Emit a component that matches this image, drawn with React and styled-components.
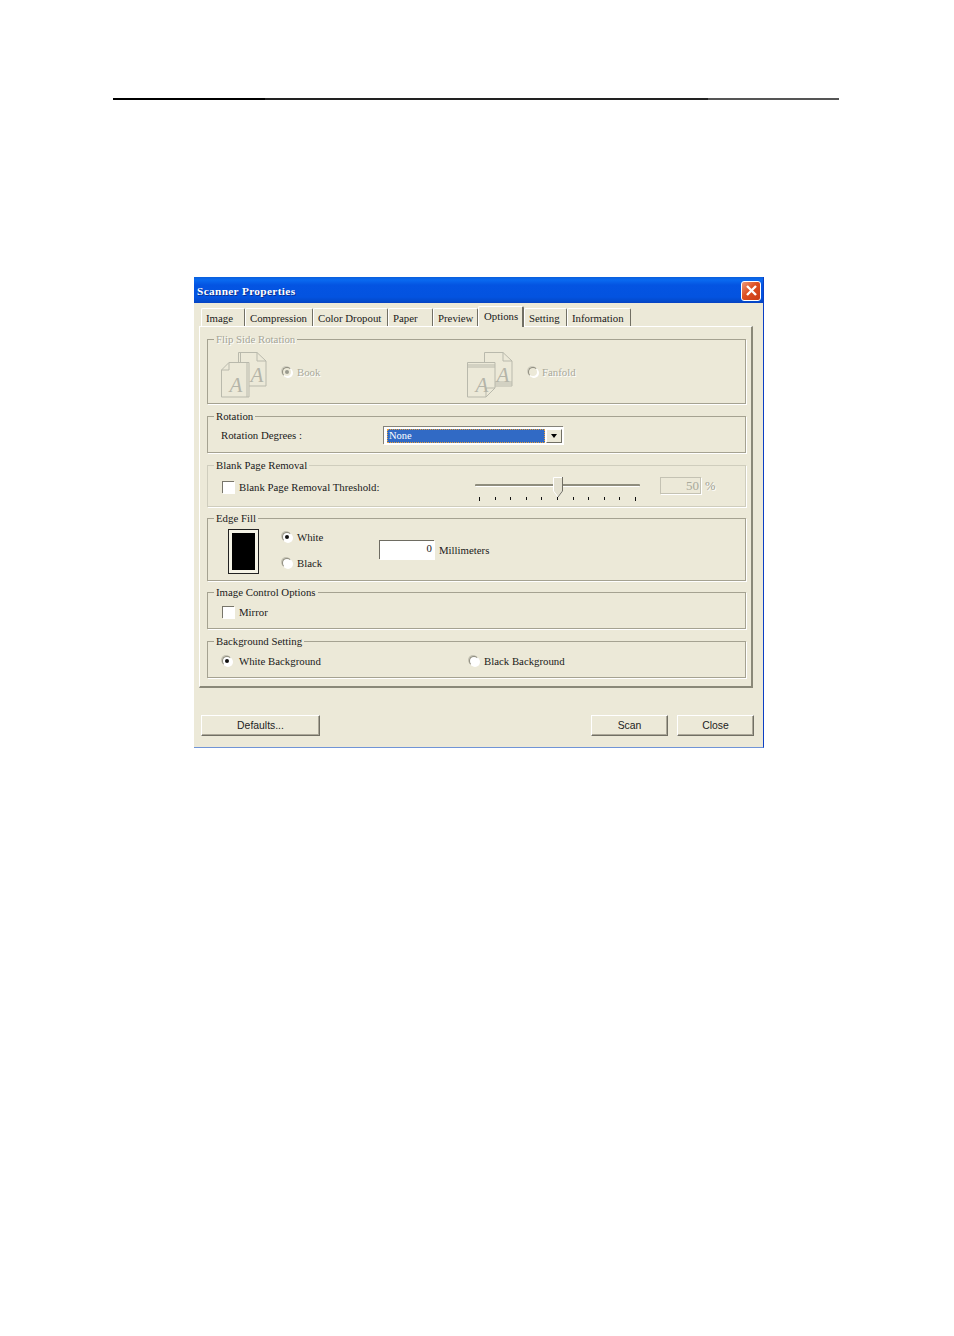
import React from "react";
import styled, { createGlobalStyle } from "styled-components";

const Global = createGlobalStyle`
  html, body { margin: 0; padding: 0; background: #fff; }
  * { box-sizing: border-box; }
`;
const Page = styled.div`
  width: 954px; height: 1336px; padding-top: 98px; background: #fff; overflow: hidden;
  font-family: "Liberation Serif", serif; font-size: 10.8px; color: #1a1a1a;
`;
const Rule = styled.div`
  width: 726px; height: 2px; margin-left: 113px; background: linear-gradient(90deg, #000 0 21%, #222 21% 82%, #555 82%);
`;
const Dialog = styled.div`
  width: 570px; height: 471px; margin: 177px 0 0 194px; background: #ece9d8;
  border-right: 1px solid #0b3fc4; border-bottom: 1px solid #7094d6;
  display: flex; flex-direction: column;
`;
const TitleBar = styled.div`
  height: 26px; flex: none; display: flex; align-items: center; justify-content: space-between;
  padding: 1px 2px 0 3px;
  background: linear-gradient(180deg, #0a5fdc 0, #0a6af0 3px, #0454e2 8px, #0353e0 20px, #0348c8 25px, #0a3fc0 100%);
`;
const Title = styled.span`
  color: #fff; font-weight: 700; font-size: 11.3px; letter-spacing: 0.35px; text-shadow: 1px 1px 0 #0a2f90;
`;
const CloseBtn = styled.div`
  width: 20px; height: 20px; border: 1px solid #fff; border-radius: 3px;
  background: linear-gradient(135deg, #ec9a7c, #dd4f22 45%, #c93c14);
  display: flex; align-items: center; justify-content: center;
`;
const Tabs = styled.div`
  display: flex; align-items: flex-end; height: 23px; padding-left: 7px; flex: none; position: relative; z-index: 1;
`;
const Tab = styled.div`
  width: ${p => p.$w}px; height: ${p => (p.$active ? 21 : 18)}px;
  margin-bottom: ${p => (p.$active ? -1 : 0)}px;
  padding: 2px 0 0 ${p => (p.$active ? 5 : 4)}px;
  border-top: 1px solid #fff; border-left: 1px solid #fff; border-right: 1px solid #716f64;
  border-radius: 2px 2px 0 0; background: #ece9d8; white-space: nowrap; line-height: 14px;
  ${p => p.$active ? "border-right-width: 2px;" : ""}
`;
const Panel = styled.div`
  width: 554px; height: 362px; margin-left: 5px; padding: 12px 5px 0 7px; flex: none;
  border-top: 1px solid #fff; border-left: 1px solid #fff; border-right: 2px solid #8a8878; border-bottom: 2px solid #8a8878;
`;
const Group = styled.div`
  position: relative; height: ${p => p.$h}px; margin-top: ${p => p.$mt || 0}px;
  border: 1px solid ${p => (p.$light ? "#cfcdbd" : "#a5a291")}; box-shadow: 1px 1px 0 #fff;
`;
const Legend = styled.span`
  position: absolute; top: -8px; left: 6px; padding: 0 2px; background: #ece9d8; line-height: 14px; white-space: nowrap;
  color: ${p => (p.$off ? "#a5a597" : "#1a1a1a")};
  ${p => (p.$off ? "text-shadow: 1px 1px 0 #fff;" : "")}
`;
const FlipRow = styled.div`
  display: grid; grid-template-columns: 246px 1fr; padding: 12px 0 0 13px;
`;
const FlipItem = styled.div`display: flex; align-items: flex-start;`;
const FlipChoice = styled.div`display: flex; align-items: center; height: 14px; margin-top: 13px;`;
const Row = styled.div`
  display: flex; align-items: center; height: ${p => p.$h || 16}px; padding-left: ${p => p.$pl || 0}px;
  margin-top: ${p => p.$mt || 0}px;
`;
const Text = styled.span`
  white-space: nowrap; margin-left: ${p => p.$ml || 0}px; width: ${p => (p.$w ? p.$w + "px" : "auto")};
  ${p => (p.$off ? "color: #a9a99b; text-shadow: 1px 1px 0 #fff;" : "")}
`;
const Radio = styled.span`
  position: relative; flex: none; width: 10px; height: 10px; border-radius: 50%; margin-left: ${p => p.$ml || 0}px;
  background: ${p => (p.$off ? "#ece9d8" : "#fff")};
  border: 1px solid;
  border-color: #8f8d7f #fff #fff #8f8d7f;
  box-shadow: -1px -1px 0 ${p => (p.$off ? "#cfcdbf" : "#c5c3b4")}, 1px 1px 0 #fff;
  &::after {
    content: ""; display: ${p => (p.$on ? "block" : "none")}; position: absolute; left: 2px; top: 2px;
    width: 4px; height: 4px; border-radius: 50%; background: ${p => (p.$off ? "#9a9a8e" : "#111")};
  }
`;
const Check = styled.span`
  flex: none; width: 12px; height: 12px; background: #fff; box-shadow: 1px 1px 0 #fff;
  border-top: 1px solid #77756a; border-left: 1px solid #77756a;
`;
const Combo = styled.div`
  display: flex; width: 180px; height: 18px; margin-left: 82px; padding: 2px 1px 1px 3px; background: #fff;
  border-top: 1px solid #85837a; border-left: 1px solid #85837a; box-shadow: 1px 1px 0 #fff; align-items: stretch;
`;
const Selected = styled.div`
  flex: 1; background: #316ac5; color: #fff; outline: 1px dotted #e9a13a; outline-offset: -1px;
  line-height: 14px; padding-left: 2px; font-size: 10.5px;
`;
const Arrow = styled.div`
  width: 16px; margin-left: 1px; background: #ece9d8; border: 1px solid; border-color: #fff #716f64 #716f64 #fff;
  display: flex; align-items: center; justify-content: center;
  &::after { content: ""; border-style: solid; border-width: 4px 3.5px 0; border-color: #000 transparent transparent; }
`;
const SliderBox = styled.div`
  position: relative; flex: none; width: 165px; height: 14px; margin-left: 96px;
`;
const Track = styled.div`
  position: absolute; left: 0; right: 0; top: 4px; height: 3px; background: #8f8d7d; border-bottom: 1px solid #fff; border-radius: 1px;
`;
const Thumb = styled.svg`position: absolute; left: 78px; top: -3px;`;
const Ticks = styled.div`
  position: absolute; left: 4px; right: 4px; top: 17px; display: flex; justify-content: space-between;
`;
const Tick = styled.i`
  display: block; width: 1px; height: ${p => (p.$big ? 4 : 3)}px; background: #111;
`;
const Percent = styled.div`
  flex: none; width: 41px; height: 17px; margin: -3px 0 0 20px; border: 1px solid #c4c2b3; box-shadow: 1px 1px 0 #fff;
  color: #a9a99b; text-align: right; font-size: 13px; line-height: 15px; padding-right: 1px;
`;
const PercentSign = styled.span`
  margin: -2px 0 0 4px; color: #a0a093; font-size: 12.5px; text-shadow: 1px 1px 0 #fff;
`;
const EdgeRow = styled.div`
  display: flex; padding: 10px 0 0 20px; height: 100%;
`;
const Swatch = styled.div`
  flex: none; width: 31px; height: 45px; padding: 3px; border: 1px solid #222; background: #f5f3e6;
  &::after { content: ""; display: block; width: 100%; height: 100%; background: #000; }
`;
const RadioCol = styled.div`
  flex: none; width: 97px; margin-left: 23px; display: flex; flex-direction: column; gap: 10px;
`;
const NumInput = styled.div`
  flex: none; align-self: flex-start; width: 55px; height: 19px; margin-top: 11px; background: #fff; text-align: right;
  padding-right: 2px; line-height: 14px;
  border-top: 1px solid #6e6c62; border-left: 1px solid #6e6c62; box-shadow: 1px 1px 0 #fff;
`;
const Millis = styled.span`
  align-self: flex-start; margin: 14px 0 0 5px; line-height: 14px; white-space: nowrap;
`;
const Footer = styled.div`
  display: flex; align-items: flex-start; padding: 27px 9px 0 7px;
`;
const Button = styled.button`
  width: ${p => p.$w}px; height: 21px; margin-left: ${p => p.$ml || 0}px; padding: 0; background: #ece9d8;
  font-family: "Liberation Sans", sans-serif; font-size: 10.4px; color: #222;
  border: 1px solid; border-color: #fff #716f64 #716f64 #fff; box-shadow: inset -1px -1px 0 #aca899;
`;
const Spacer = styled.div`flex: 1;`;

const PagesIcon = ({ fan }) => (
  <svg width="46" height="46" viewBox="0 0 46 46" fill="#ece9d8" stroke="#b9b9ac" strokeWidth="1">
    <path d="M17.5 .5H36L45 9V34H17.5Z" />
    <path d="M36 .5V9H45" fill="none" />
    {fan ? <path d="M17.5 30H45M17.5 32H45" fill="none" /> : <path d="M19.5 .5V10" fill="none" />}
    <text x="36" y="30" fontFamily="Liberation Serif" fontStyle="italic" fontSize="21" fill="#b4b4a8" stroke="none" textAnchor="middle">A</text>
    <path d={fan ? "M.5 10.5H28V36L19 45H.5Z" : "M.5 18L8 10.5H28V45H.5Z"} />
    {fan ? <path d="M.5 13H28M.5 15H28M19 45V36H28" fill="none" /> : <path d="M8 10.5V18H.5M26 10.5V45" fill="none" />}
    <text x="15" y="40" fontFamily="Liberation Serif" fontStyle="italic" fontSize="21" fill="#b4b4a8" stroke="none" textAnchor="middle">A</text>
  </svg>
);

const TABS = [["Image", 44], ["Compression", 68], ["Color Dropout", 75], ["Paper", 45], ["Preview", 45], ["Options", 46, true], ["Setting", 43], ["Information", 64]];

export default function App() {
  return (
    <Page>
      <Global />
      <Rule />
      <Dialog>
        <TitleBar>
          <Title>Scanner Properties</Title>
          <CloseBtn>
            <svg width="13" height="13" viewBox="0 0 13 13"><path d="M2 2L11 11M11 2L2 11" stroke="#fff" strokeWidth="2.4" /></svg>
          </CloseBtn>
        </TitleBar>
        <Tabs>
          {TABS.map(([t, w, a]) => <Tab key={t} $w={w} $active={a}>{t}</Tab>)}
        </Tabs>
        <Panel>
          <Group $h={65}>
            <Legend $off>Flip Side Rotation</Legend>
            <FlipRow>
              <FlipItem>
                <PagesIcon />
                <FlipChoice>
                  <Radio $off $on $ml={15} />
                  <Text $off $ml={5}>Book</Text>
                </FlipChoice>
              </FlipItem>
              <FlipItem>
                <PagesIcon fan />
                <FlipChoice>
                  <Radio $off $ml={15} />
                  <Text $off $ml={4}>Fanfold</Text>
                </FlipChoice>
              </FlipItem>
            </FlipRow>
          </Group>
          <Group $h={37} $mt={12}>
            <Legend>Rotation</Legend>
            <Row $h={18} $pl={13} $mt={9}>
              <Text $w={80}>Rotation Degrees :</Text>
              <Combo><Selected>None</Selected><Arrow /></Combo>
            </Row>
          </Group>
          <Group $h={42} $mt={12} $light>
            <Legend>Blank Page Removal</Legend>
            <Row $h={14} $pl={14} $mt={14}>
              <Check />
              <Text $ml={5} $w={140}>Blank Page Removal Threshold:</Text>
              <SliderBox>
                <Track />
                <Thumb width="11" height="21" viewBox="0 0 11 21">
                  <path d="M.5 .5H9.5V14L5 20L.5 14Z" fill="#e4e1d1" stroke="#fff" />
                  <path d="M9.5 0V14L5 20" fill="none" stroke="#716f64" />
                </Thumb>
                <Ticks>{Array.from({ length: 11 }, (_, i) => <Tick key={i} $big={i === 0 || i === 10} />)}</Ticks>
              </SliderBox>
              <Percent>50</Percent>
              <PercentSign>%</PercentSign>
            </Row>
          </Group>
          <Group $h={63} $mt={11}>
            <Legend>Edge Fill</Legend>
            <EdgeRow>
              <Swatch />
              <RadioCol>
                <Row><Radio $on /><Text $ml={5}>White</Text></Row>
                <Row><Radio /><Text $ml={5}>Black</Text></Row>
              </RadioCol>
              <NumInput>0</NumInput>
              <Millis>Millimeters</Millis>
            </EdgeRow>
          </Group>
          <Group $h={37} $mt={11}>
            <Legend>Image Control Options</Legend>
            <Row $h={14} $pl={14} $mt={12}>
              <Check />
              <Text $ml={5}>Mirror</Text>
            </Row>
          </Group>
          <Group $h={37} $mt={12}>
            <Legend>Background Setting</Legend>
            <Row $h={14} $pl={14} $mt={12}>
              <Radio $on />
              <Text $ml={7} $w={230}>White Background</Text>
              <Radio />
              <Text $ml={5}>Black Background</Text>
            </Row>
          </Group>
        </Panel>
        <Footer>
          <Button $w={119}>Defaults...</Button>
          <Spacer />
          <Button $w={77}>Scan</Button>
          <Button $w={77} $ml={9}>Close</Button>
        </Footer>
      </Dialog>
    </Page>
  );
}
